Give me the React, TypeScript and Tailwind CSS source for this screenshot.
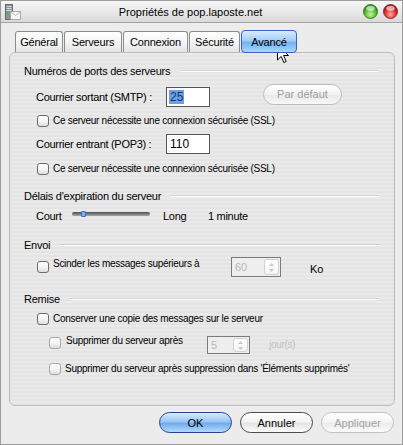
import React from 'react';

function Checkbox({ disabled }: { disabled?: boolean }) {
    return (
        <span
            className={`block w-[12px] h-[12px] shrink-0 rounded-[3px] border bg-[linear-gradient(180deg,#ffffff_0%,#f3f3f3_55%,#dcdcdc_100%)] ${
                disabled ? 'border-[#a8a8a8]' : 'border-[#6c6c6c]'
            }`}
        />
    );
}

function SpinButton() {
    return (
        <div className="flex flex-col items-center justify-center gap-[3px] w-[15px] h-full rounded-[3px] border border-[#d2d2d2] bg-[linear-gradient(180deg,#ffffff,#f4f4f4)]">
            <svg width="5" height="3" viewBox="0 0 5 3">
                <path d="M0 3 L2.5 0 L5 3 Z" fill="#c8c8c8" />
            </svg>
            <svg width="5" height="3" viewBox="0 0 5 3">
                <path d="M0 0 L2.5 3 L5 0 Z" fill="#c8c8c8" />
            </svg>
        </div>
    );
}

function SectionHeader({ label, className }: { label: string; className: string }) {
    return (
        <div className={`flex items-center h-[14px] pl-[14px] pr-[15px] ${className}`}>
            <span className="text-[11px] tracking-[-0.25px] leading-[14px] whitespace-nowrap">{label}</span>
            <div className="flex-1 ml-[10px] h-[2px] border-t border-t-[#d2d2d2] border-b border-b-white" />
        </div>
    );
}

function CheckRow({ label, disabled, className }: { label: string; disabled?: boolean; className: string }) {
    return (
        <div className={`flex items-center h-[12px] ${className}`}>
            <Checkbox disabled={disabled} />
            <span className="ml-[4px] text-[10px] tracking-[-0.28px] leading-[12px] whitespace-nowrap">{label}</span>
        </div>
    );
}

function TitleIcon() {
    return (
        <svg width="18" height="18" viewBox="0 0 18 18">
            <rect x="2.5" y="1.5" width="7" height="15" fill="#8d939a" stroke="#50555a" strokeWidth="0.8" />
            <rect x="3.5" y="3" width="5" height="1" fill="#d4d7da" />
            <rect x="3.5" y="5" width="5" height="1" fill="#d4d7da" />
            <rect x="3.5" y="7" width="5" height="1" fill="#d4d7da" />
            <rect x="3.5" y="9.5" width="2" height="2" fill="#35c43a" />
            <rect x="7.5" y="8.5" width="10" height="8" fill="#f6f6f6" stroke="#9a9a9a" strokeWidth="0.8" />
            <path d="M7.5 8.5 L12.5 12.5 L17.5 8.5" fill="none" stroke="#a8a8a8" strokeWidth="0.8" />
        </svg>
    );
}

function Orb({ id, light, mid, dark, edge }: { id: string; light: string; mid: string; dark: string; edge: string }) {
    return (
        <svg width="15" height="15" viewBox="0 0 15 15">
            <defs>
                <radialGradient id={id} cx="50%" cy="70%" r="60%">
                    <stop offset="0%" stopColor={light} />
                    <stop offset="60%" stopColor={mid} />
                    <stop offset="100%" stopColor={dark} />
                </radialGradient>
            </defs>
            <circle cx="7.5" cy="7.5" r="7" fill={`url(#${id})`} stroke={edge} strokeWidth="0.8" />
            <ellipse cx="7.5" cy="4.3" rx="4.2" ry="2.6" fill="#ffffff" opacity="0.6" />
        </svg>
    );
}

function Cursor() {
    return (
        <svg width="13" height="20" viewBox="0 0 13 20" className="absolute left-[276px] top-[43px]">
            <path
                d="M0.5 0.5 L0.5 16 L4.2 12.4 L6.8 18.5 L9.2 17.5 L6.6 11.5 L11.5 11.5 Z"
                fill="#ffffff"
                stroke="#000000"
                strokeWidth="1"
                strokeLinejoin="round"
            />
        </svg>
    );
}

const tabs = [
    { label: 'Général', w: 'w-[48px]' },
    { label: 'Serveurs', w: 'w-[58px]' },
    { label: 'Connexion', w: 'w-[65px]' },
    { label: 'Sécurité', w: 'w-[51px]' },
];

export default function App() {
    return (
        <div className="relative w-[403px] h-[445px] flex flex-col bg-[#ececec] border border-[#9c9c9c] font-['Liberation_Sans',Arial,sans-serif] text-black overflow-hidden">
            {/* title bar */}
            <div className="flex items-center h-[22px] shrink-0 border-b border-b-[#a4a4a4] bg-[linear-gradient(180deg,#f7f7f7_0%,#e6e6e6_60%,#d9d9d9_100%)]">
                <div className="w-[22px] pl-[2px] flex items-center">
                    <TitleIcon />
                </div>
                <div className="flex-1 text-center text-[11px] leading-[14px]">Propriétés de pop.laposte.net</div>
                <div className="w-[44px] flex justify-end gap-[5px] pr-[4px]">
                    <Orb id="g" light="#c6f5a6" mid="#5cc234" dark="#2f8a14" edge="#2c6a16" />
                    <Orb id="r" light="#ffb0a8" mid="#e0383a" dark="#a81212" edge="#7e1010" />
                </div>
            </div>

            {/* tabs */}
            <div className="relative z-10 flex items-end h-[22px] mt-[7px] ml-[14px] gap-[1px]">
                {tabs.map((t) => (
                    <div
                        key={t.label}
                        className={`${t.w} h-[21px] flex items-center justify-center rounded-t-[3px] border border-b-0 border-[#8c8c8c] bg-[linear-gradient(180deg,#ffffff_0%,#f5f5f5_50%,#e4e4e4_100%)] text-[11px] tracking-[-0.2px] leading-[14px]`}
                    >
                        {t.label}
                    </div>
                ))}
                <div className="self-start w-[56px] h-[23px] flex items-center justify-center rounded-[4px] border border-[#3a62c6] bg-[linear-gradient(180deg,#d8ecfd_0%,#a3cdf8_45%,#76b2f1_55%,#aad6fc_100%)] text-[11px] tracking-[-0.2px] leading-[14px]">
                    Avancé
                </div>
            </div>

            {/* panel */}
            <div className="ml-[8px] w-[386px] h-[354px] shrink-0 flex flex-col rounded-[6px] border border-[#bdbdbd] bg-[image:repeating-linear-gradient(180deg,#eaeaea_0px,#eaeaea_2px,#e4e4e4_2px,#e4e4e4_4px)]">
                <SectionHeader label="Numéros de ports des serveurs" className="mt-[11px]" />

                <div className="flex items-center h-[20px] mt-[9px] pl-[26px]">
                    <span className="w-[130px] text-[11px] tracking-[-0.3px] leading-[14px]">Courrier sortant (SMTP) :</span>
                    <div className="w-[44px] h-[20px] flex items-center pl-[2px] border border-[#555555] bg-white">
                        <span className="bg-[#6e9fe2] text-[#16366e] text-[12px] leading-[14px] px-[1px]">25</span>
                    </div>
                    <div className="ml-[53px] mb-[6px] w-[79px] h-[21px] flex items-center justify-center rounded-full border border-[#bdbdbd] bg-[linear-gradient(180deg,#ffffff_0%,#f2f2f2_50%,#e8e8e8_51%,#f8f8f8_100%)] text-[11px] text-[#9e9e9e] leading-[14px]">
                        Par défaut
                    </div>
                </div>

                <CheckRow label="Ce serveur nécessite une connexion sécurisée (SSL)" className="mt-[8px] pl-[27px]" />

                <div className="flex items-center h-[20px] mt-[7px] pl-[26px]">
                    <span className="w-[130px] text-[11px] tracking-[-0.3px] leading-[14px]">Courrier entrant (POP3) :</span>
                    <div className="w-[44px] h-[20px] flex items-center pl-[3px] border border-[#555555] bg-white text-[12px] leading-[14px]">
                        110
                    </div>
                </div>

                <CheckRow label="Ce serveur nécessite une connexion sécurisée (SSL)" className="mt-[9px] pl-[27px]" />

                <SectionHeader label="Délais d'expiration du serveur" className="mt-[14px]" />

                <div className="flex items-center h-[14px] mt-[6px] pl-[26px] text-[11px] tracking-[-0.3px] leading-[14px]">
                    <span className="w-[36px]">Court</span>
                    <div className="relative mb-[4px] w-[78px] h-[4px] rounded-full bg-[linear-gradient(180deg,#4e4e4e_0%,#7a7a7a_50%,#a8a8a8_100%)]">
                        <span className="absolute left-[9px] top-[-1px] w-[5px] h-[6px] rounded-[1px] border border-[#3d6fc4] bg-[#79aef0]" />
                    </div>
                    <span className="ml-[13px] w-[45px]">Long</span>
                    <span>1 minute</span>
                </div>

                <SectionHeader label="Envoi" className="mt-[15px]" />

                <div className="flex items-center h-[20px] mt-[5px] pl-[27px]">
                    <Checkbox />
                    <span className="ml-[4px] mb-[6px] w-[178px] text-[10px] tracking-[-0.28px] leading-[12px] whitespace-nowrap">
                        Scinder les messages supérieurs à
                    </span>
                    <div className="w-[50px] h-[20px] flex items-center justify-between pl-[3px] pr-[1px] py-[1px] border border-[#7c7c7c] bg-[#eeeeee]">
                        <span className="text-[11px] leading-[14px] text-[#b8b8b8]">60</span>
                        <SpinButton />
                    </div>
                    <span className="ml-[29px] mt-[4px] text-[11px] leading-[14px]">Ko</span>
                </div>

                <SectionHeader label="Remise" className="mt-[15px]" />

                <CheckRow label="Conserver une copie des messages sur le serveur" className="mt-[7px] pl-[27px]" />

                <div className="flex items-center h-[18px] mt-[11px] pl-[39px]">
                    <span className="mb-[4px]">
                        <Checkbox disabled />
                    </span>
                    <span className="ml-[5px] mb-[8px] w-[141px] text-[10px] tracking-[-0.28px] leading-[12px] whitespace-nowrap">
                        Supprimer du serveur après
                    </span>
                    <div className="w-[43px] h-[18px] flex items-center justify-between pl-[3px] pr-[1px] py-[1px] border border-[#7c7c7c] bg-[#eeeeee]">
                        <span className="text-[11px] leading-[14px] text-[#b8b8b8]">5</span>
                        <SpinButton />
                    </div>
                    <span className="ml-[19px] text-[10px] tracking-[-0.28px] leading-[12px] text-[#c2c2c2]">jour(s)</span>
                </div>

                <CheckRow
                    label="Supprimer du serveur après suppression dans 'Éléments supprimés'"
                    disabled
                    className="mt-[9px] pl-[39px]"
                />
            </div>

            {/* buttons */}
            <div className="flex justify-end gap-[8px] mt-[6px] pr-[8px]">
                <div className="w-[73px] h-[21px] flex items-center justify-center rounded-full border border-[#27458f] bg-[linear-gradient(180deg,#d6eafd_0%,#96c5f4_48%,#6ea9ee_52%,#b2d9fd_100%)] text-[11px] leading-[14px]">
                    OK
                </div>
                <div className="w-[73px] h-[21px] flex items-center justify-center rounded-full border border-[#4c4c4c] bg-[linear-gradient(180deg,#ffffff_0%,#f3f3f3_48%,#e4e4e4_52%,#fbfbfb_100%)] text-[11px] leading-[14px]">
                    Annuler
                </div>
                <div className="w-[73px] h-[21px] flex items-center justify-center rounded-full border border-[#c2c2c2] bg-[linear-gradient(180deg,#ffffff_0%,#f5f5f5_48%,#ebebeb_52%,#fbfbfb_100%)] text-[11px] leading-[14px] text-[#a2a2a2]">
                    Appliquer
                </div>
            </div>

            <Cursor />
        </div>
    );
}
